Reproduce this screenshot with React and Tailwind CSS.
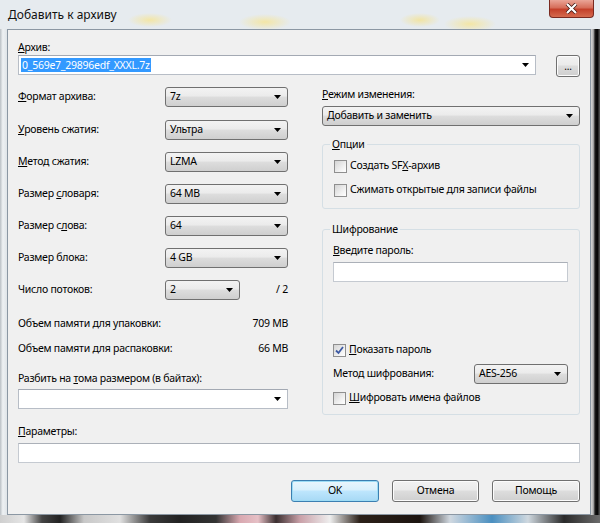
const Arrow = () => (
  <svg width="7" height="4" viewBox="0 0 7 4" className="shrink-0">
    <path d="M0 0H7L3.5 4Z" fill="#000" />
  </svg>
);

// non-editable drop-down list, Win7 look
const Select = ({ value, className }) => (
  <div
    className={`flex h-[20px] items-center justify-between rounded-[3px] border border-[#707070] bg-[linear-gradient(#f3f3f3,#ebebeb_45%,#dddddd_50%,#cfcfcf)] pl-[4px] pr-[6px] ${className}`}
  >
    <span>{value}</span>
    <Arrow />
  </div>
);

// editable combo box: white field with arrow
const Combo = ({ children, className }) => (
  <div
    className={`flex h-[20px] items-center justify-between border border-[#b7bdc6] border-t-[#a3a9b3] bg-white pl-[2px] pr-[6px] ${className}`}
  >
    <span className="flex items-center">{children}</span>
    <Arrow />
  </div>
);

const Field = ({ className }) => (
  <div className={`h-[20px] border border-[#c5cad1] border-t-[#abb0b8] bg-white ${className}`} />
);

const Check = ({ checked, children }) => (
  <div className="flex h-[16px] items-center">
    <div className="flex h-[13px] w-[13px] items-center justify-center border border-[#8f8f8f] bg-[linear-gradient(135deg,#d4d4d4,#f4f4f4_70%,#fff)]">
      {checked && (
        <svg width="9" height="9" viewBox="0 0 9 9">
          <path d="M1 4.5L3.5 7L8 1" fill="none" stroke="#3d5aa3" strokeWidth="1.8" />
        </svg>
      )}
    </div>
    <span className="ml-[3px]">{children}</span>
  </div>
);

const Button = ({ children, primary, className }) => (
  <div
    className={`flex items-center justify-center rounded-[3px] border ${
      primary
        ? "border-[#3c7fb1] bg-[linear-gradient(#eaf6fd,#d9f0fc_45%,#bee6fd_50%,#a7d9f5)] shadow-[inset_0_0_0_1px_#9ddcf5]"
        : "border-[#707070] bg-[linear-gradient(#f2f2f2,#ebebeb_45%,#dddddd_50%,#cfcfcf)] shadow-[inset_0_0_0_1px_#fcfcfc]"
    } ${className}`}
  >
    {children}
  </div>
);

const Row = ({ label, children }) => (
  <div className="flex h-[20px] items-center">
    <span className="w-[147px]">{label}</span>
    {children}
  </div>
);

export default function App() {
  return (
    <div className="flex h-[523px] w-[600px] flex-col overflow-hidden bg-[#e6ebef] bg-[radial-gradient(ellipse_22px_7px_at_150px_20px,#f3e6a6,transparent),radial-gradient(ellipse_26px_8px_at_265px_22px,#f3e6a6,transparent),radial-gradient(ellipse_20px_7px_at_420px_20px,#f1e4a4,transparent),radial-gradient(ellipse_26px_8px_at_470px_24px,#f3e6a6,transparent)] font-['Noto_Sans',sans-serif] text-[10.5px] tracking-[-0.25px] text-black">
      {/* title bar */}
      <div className="flex h-[29px] shrink-0 items-start">
        <span className="ml-[8px] mt-[6px] text-[12px] tracking-normal text-[#111]">Добавить к архиву</span>
        <div className="ml-auto mr-[6px] flex h-[18px] w-[45px] items-center justify-center rounded-b-[4px] border border-t-0 border-[#7a2a20] bg-[linear-gradient(#eaa597,#d66e5a_45%,#c4402a_55%,#d56a4e)]">
          <svg width="13" height="11" viewBox="0 0 13 11">
            <path d="M2 1L11 10M11 1L2 10" stroke="#3b1510" strokeWidth="3.6" />
            <path d="M2 1L11 10M11 1L2 10" stroke="#fff" strokeWidth="2.2" />
          </svg>
        </div>
      </div>

      <div className="flex h-[486px] shrink-0">
        <div className="w-[7px] bg-[linear-gradient(to_right,#b9bfc4,#eef1f3_40%,#dfe4e8)]" />
        {/* client area */}
        <div className="flex w-[584px] flex-col border border-[#8b97a3] bg-[#f0f0f0] px-[10px] pt-[10px]">
          <div className="h-[15px] leading-[15px]">
            <u>А</u>рхив:
          </div>
          <div className="flex items-start">
            <Combo className="w-[518px]">
              <span className="bg-[#3399ff] px-[1px] leading-[14px] text-white">0_569e7_29896edf_XXXL.7z</span>
            </Combo>
            <Button className="ml-[20px] h-[22px] w-[24px] text-[10px]">...</Button>
          </div>

          <div className="mt-[9px] flex">
            {/* left column */}
            <div className="flex w-[270px] flex-col pt-[1px]">
              <Row label={<><u>Ф</u>ормат архива:</>}>
                <Select value="7z" className="w-[123px]" />
              </Row>
              <div className="mt-[13px]">
                <Row label={<><u>У</u>ровень сжатия:</>}>
                  <Select value="Ультра" className="w-[123px]" />
                </Row>
              </div>
              <div className="mt-[12px]">
                <Row label={<><u>М</u>етод сжатия:</>}>
                  <Select value="LZMA" className="w-[123px]" />
                </Row>
              </div>
              <div className="mt-[12px]">
                <Row label={<>Размер <u>с</u>ловаря:</>}>
                  <Select value="64 MB" className="w-[123px]" />
                </Row>
              </div>
              <div className="mt-[12px]">
                <Row label={<>Размер с<u>л</u>ова:</>}>
                  <Select value="64" className="w-[123px]" />
                </Row>
              </div>
              <div className="mt-[12px]">
                <Row label="Размер блока:">
                  <Select value="4 GB" className="w-[123px]" />
                </Row>
              </div>
              <div className="mt-[12px]">
                <Row label="Число потоков:">
                  <Select value="2" className="w-[75px]" />
                  <span className="ml-auto">/ 2</span>
                </Row>
              </div>
              <div className="mt-[16px] flex h-[16px] items-center justify-between">
                <span>Объем памяти для упаковки:</span>
                <span>709 MB</span>
              </div>
              <div className="mt-[9px] flex h-[16px] items-center justify-between">
                <span>Объем памяти для распаковки:</span>
                <span>66 MB</span>
              </div>
              <div className="mt-[13px] h-[16px] leading-[16px]">
                Разбить на <u>т</u>ома размером (в байтах):
              </div>
              <Combo className="mt-[3px] w-[270px]" />
            </div>

            {/* right column */}
            <div className="ml-[34px] flex w-[258px] flex-col">
              <div className="h-[16px] leading-[16px]">
                <u>Р</u>ежим изменения:
              </div>
              <Select value="Добавить и заменить" className="mt-[4px] w-[258px]" />

              <fieldset className="mt-[10px] rounded-[3px] border border-[#d5dfe5] px-[11px] pb-[10px]">
                <legend className="-ml-[4px] h-[16px] px-[2px] leading-[16px]">
                  <u>О</u>пции
                </legend>
                <div className="mt-[6px] flex flex-col gap-[8px]">
                  <Check>
                    Создать SF<u>X</u>-архив
                  </Check>
                  <Check>Сжимать открытые для записи файлы</Check>
                </div>
              </fieldset>

              <fieldset className="mt-[12px] rounded-[3px] border border-[#d5dfe5] px-[10px] pb-[8px]">
                <legend className="-ml-[3px] h-[16px] px-[2px] leading-[16px]">Шифрование</legend>
                <div className="mt-[5px] h-[16px] leading-[16px]">
                  <u>В</u>ведите пароль:
                </div>
                <Field className="mt-[4px] w-[235px]" />
                <div className="mt-[60px]">
                  <Check checked>
                    <u>П</u>оказать пароль
                  </Check>
                </div>
                <div className="mt-[6px] flex h-[20px] items-center">
                  <span className="w-[141px]">Метод шифрования:</span>
                  <Select value="AES-256" className="w-[94px]" />
                </div>
                <div className="mt-[6px]">
                  <Check>
                    <u>Ш</u>ифровать имена файлов
                  </Check>
                </div>
              </fieldset>
            </div>
          </div>

          <div className="mt-[8px] h-[16px] leading-[16px]">
            <u>П</u>араметры:
          </div>
          <Field className="mt-[4px] w-[562px]" />

          <div className="mt-[17px] flex justify-end gap-[13px]">
            <Button primary className="h-[22px] w-[88px]">OK</Button>
            <Button className="h-[22px] w-[87px]">Отмена</Button>
            <Button className="h-[22px] w-[88px]">Помощь</Button>
          </div>
        </div>
        <div className="flex-1 bg-[linear-gradient(to_right,#d6d6d6,#b0b0b0_25%,#1c1c1c_45%,#000_70%,#5d5d5d)]" />
      </div>

      <div className="flex-1 bg-[linear-gradient(to_right,#cfcfcf,#e5e5e5_4%,#444_7%,#222_10%,#c8c8c8_14%,#e0e0e0_20%,#3a3a3a_25%,#222_30%,#333_36%,#d8a8b0_40%,#e6c0c6_43%,#3b2f30_46%,#c9a0a8_50%,#eeeeee_55%,#2b2018_60%,#1c1410_70%,#d0d8e0_75%,#4a8fc0_82%,#cfd8df_88%,#2a2a2a_94%,#6b6b6b)]" />
    </div>
  );
}
